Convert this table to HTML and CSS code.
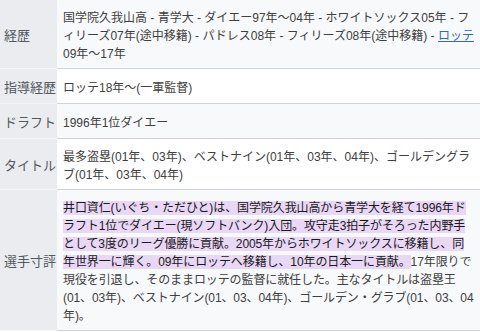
FILE: index.html
```html
<!DOCTYPE html>
<html lang="ja">
<head>
<meta charset="utf-8">
<title>井口資仁</title>
<link rel="stylesheet" href="styles.css">
</head>
<body>
<div class="info">
  <div class="row alt">
    <div class="th">経歴</div>
    <div class="td"><p class="txt">国学院久我山高 - 青学大 - ダイエー97年～04年 - ホワイトソックス05年 - フィリーズ07年(途中移籍) - パドレス08年 - フィリーズ08年(途中移籍) - <a href="#">ロッテ</a>09年～17年</p></div>
  </div>
  <div class="row">
    <div class="th">指導経歴</div>
    <div class="td"><p class="txt">ロッテ18年～(一軍監督)</p></div>
  </div>
  <div class="row alt">
    <div class="th">ドラフト</div>
    <div class="td"><p class="txt">1996年1位ダイエー</p></div>
  </div>
  <div class="row">
    <div class="th">タイトル</div>
    <div class="td"><p class="txt">最多盗塁(01年、03年)、ベストナイン(01年、03年、04年)、ゴールデングラブ(01年、03年、04年)</p></div>
  </div>
  <div class="row alt">
    <div class="th">選手寸評</div>
    <div class="td"><p class="txt lines"><span class="mark">井口資仁(いぐち・ただひと)は、国学院久我山高から青学大を経て1996年ド<br>ラフト1位でダイエー(現ソフトバンク)入団。攻守走3拍子がそろった内野手<br>として3度のリーグ優勝に貢献。2005年からホワイトソックスに移籍し、同<br>年世界一に輝く。09年にロッテへ移籍し、10年の日本一に貢献。</span>17年限りで<br>現役を引退し、そのままロッテの監督に就任した。主なタイトルは盗塁王<br>(01、03年)、ベストナイン(01、03、04年)、ゴールデン・グラブ(01、03、04<br>年)。</p></div>
  </div>
</div>
</body>
</html>
```

FILE: styles.css
```css
html, body {
  margin: 0;
  padding: 0;
  background: #ffffff;
  overflow: hidden;
}

.info {
  width: 480px;
  font-family: "Liberation Sans", "Noto Sans CJK JP", sans-serif;
  color: #404040;
}

.row {
  display: grid;
  grid-template-columns: 57px 1fr;
}

.th {
  display: flex;
  align-items: center;
  padding: 8px 2px 4px 4px;
  background: #eaecf0;
  border-bottom: 1px solid #f4f5f7;
  font-size: 13px;
  line-height: 22px;
  color: #54595d;
  white-space: nowrap;
}

.td {
  display: flex;
  align-items: center;
  min-width: 0;
  overflow: hidden;
  padding: 9px 1px 5px 6px;
  background: #ffffff;
  border-bottom: 1px solid #d0d3d8;
}

.row.alt .td {
  background: #f8f9fa;
}

.txt {
  margin: 0;
  font-size: 12px;
  line-height: 18px;
}

.txt.lines {
  white-space: nowrap;
  letter-spacing: -0.1px;
}

.txt a {
  color: #3366cc;
  text-decoration: underline;
}

.mark {
  background: #e9d7f6;
  color: #1a1a1a;
}
```
